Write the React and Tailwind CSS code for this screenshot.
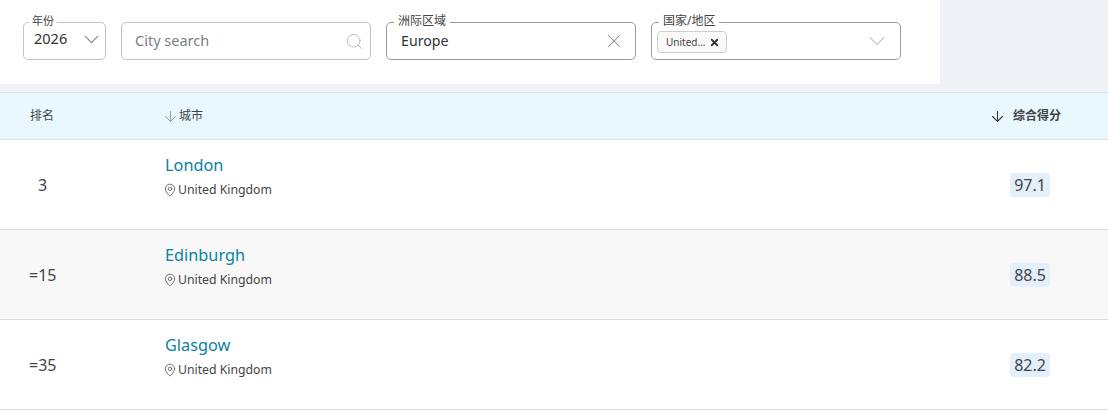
import React from 'react';
import { ArrowDown, ChevronDown, MapPin, Search, X } from 'lucide-react';

const font = { fontFamily: '"Noto Sans", "Noto Sans CJK SC", sans-serif' };

const cities = [
  { rank: '3', name: 'London', score: '97.1', rankClass: 'pl-[38px]' },
  { rank: '=15', name: 'Edinburgh', score: '88.5', rankClass: 'pl-[29px]', shaded: true },
  { rank: '=35', name: 'Glasgow', score: '82.2', rankClass: 'pl-[29px]' },
];

const Field = ({ label, width, border, legendClass, bodyClass, children }) => (
  <fieldset className={`h-[44px] rounded-[5px] border ${width} ${border}`}>
    <legend className={`h-[12px] leading-[10px] text-[#444] ${legendClass}`}>{label}</legend>
    <div className={`h-[31px] flex items-center justify-between ${bodyClass}`}>{children}</div>
  </fieldset>
);

const App = () => {
  return (
    <div className="w-[1108px] h-[410px] overflow-hidden bg-[#eef1f6]" style={font}>
      {/* Filters */}
      <div className="w-[940px] h-[84px] bg-white flex items-start pl-[23px] pt-[16px] gap-[15px]">
        <Field
          label="年份"
          width="w-[83px]"
          border="border-[#c4c4c4]"
          legendClass="ml-[5px] px-[3px] text-[11px]"
          bodyClass="pl-[10px] pr-[1px]"
        >
          <span className="text-[14.5px] text-[#333] -mt-[9px]">2026</span>
          <ChevronDown className="w-[25px] h-[25px] text-[#8a8a8a] -mt-[9px]" strokeWidth={1.2} />
        </Field>
        <div className="w-[250px] h-[38px] mt-[6px] rounded-[5px] border border-[#c4c4c4] flex items-center justify-between pl-[13px] pr-[6px]">
          <span className="text-[14.5px] text-[#7a7f85]">City search</span>
          <Search className="w-[19px] h-[19px] text-[#b5b5b5]" strokeWidth={1.1} />
        </div>
        <Field
          label="洲际区域"
          width="w-[250px]"
          border="border-[#9a9a9a]"
          legendClass="ml-[7px] px-[4px] text-[12px]"
          bodyClass="pl-[14px] pr-[10px]"
        >
          <span className="text-[14.2px] text-[#333] -mt-[5px]">Europe</span>
          <X className="w-[22px] h-[22px] text-[#8a8a8a] -mt-[5px]" strokeWidth={1.1} />
        </Field>
        <Field
          label="国家/地区"
          width="w-[250px]"
          border="border-[#9a9a9a]"
          legendClass="ml-[7px] px-[4px] text-[12px]"
          bodyClass="pl-[5px] pr-[9px]"
        >
          <span className="h-[22px] -mt-[3px] pl-[8px] pr-[6px] rounded-[4px] border border-[#cfcfcf] bg-[#fafafa] flex items-center gap-[3px] text-[10px] text-[#444]">
            United...
            <X className="w-[11px] h-[11px] text-[#333]" strokeWidth={4} />
          </span>
          <ChevronDown className="w-[28px] h-[28px] text-[#b5b5b5] -mt-[5px]" strokeWidth={0.9} />
        </Field>
      </div>

      {/* Table header */}
      <div className="mt-[8px] h-[48px] flex items-center bg-[#e9f7ff] border-y border-[#dcdfe3] text-[12px] text-[#444]">
        <span className="w-[162px] pl-[30px]">排名</span>
        <span className="flex-1 flex items-center">
          <ArrowDown className="w-[17px] h-[17px] text-[#8a8f96]" strokeWidth={1.2} />
          城市
        </span>
        <span className="flex items-center gap-[7px] pr-[47px] font-bold">
          <ArrowDown className="w-[17px] h-[17px] text-[#333]" strokeWidth={1.5} />
          综合得分
        </span>
      </div>

      {/* Rows */}
      {cities.map((city) => (
        <div
          key={city.name}
          className={`h-[90px] flex items-center border-b border-[#dcdcdc] ${city.shaded ? 'bg-[#f8f8f8]' : 'bg-white'}`}
        >
          <span className={`w-[165px] text-[16px] text-[#444] ${city.rankClass}`}>{city.rank}</span>
          <div className="flex-1 flex flex-col pb-[16px]">
            <span className="text-[16.3px] leading-[22px] text-[#0a82a3]">{city.name}</span>
            <span className="mt-[5px] -ml-[2px] flex items-center gap-[1px] text-[12.25px] leading-[18px] text-[#444]">
              <MapPin className="w-[14px] h-[14px] text-[#555]" strokeWidth={1.4} />
              United Kingdom
            </span>
          </div>
          <span className="mr-[58px] w-[40px] h-[24px] rounded-[4px] bg-[#e4effc] flex items-center justify-center text-[16px] text-[#444]">
            {city.score}
          </span>
        </div>
      ))}
    </div>
  );
};

export default App;
